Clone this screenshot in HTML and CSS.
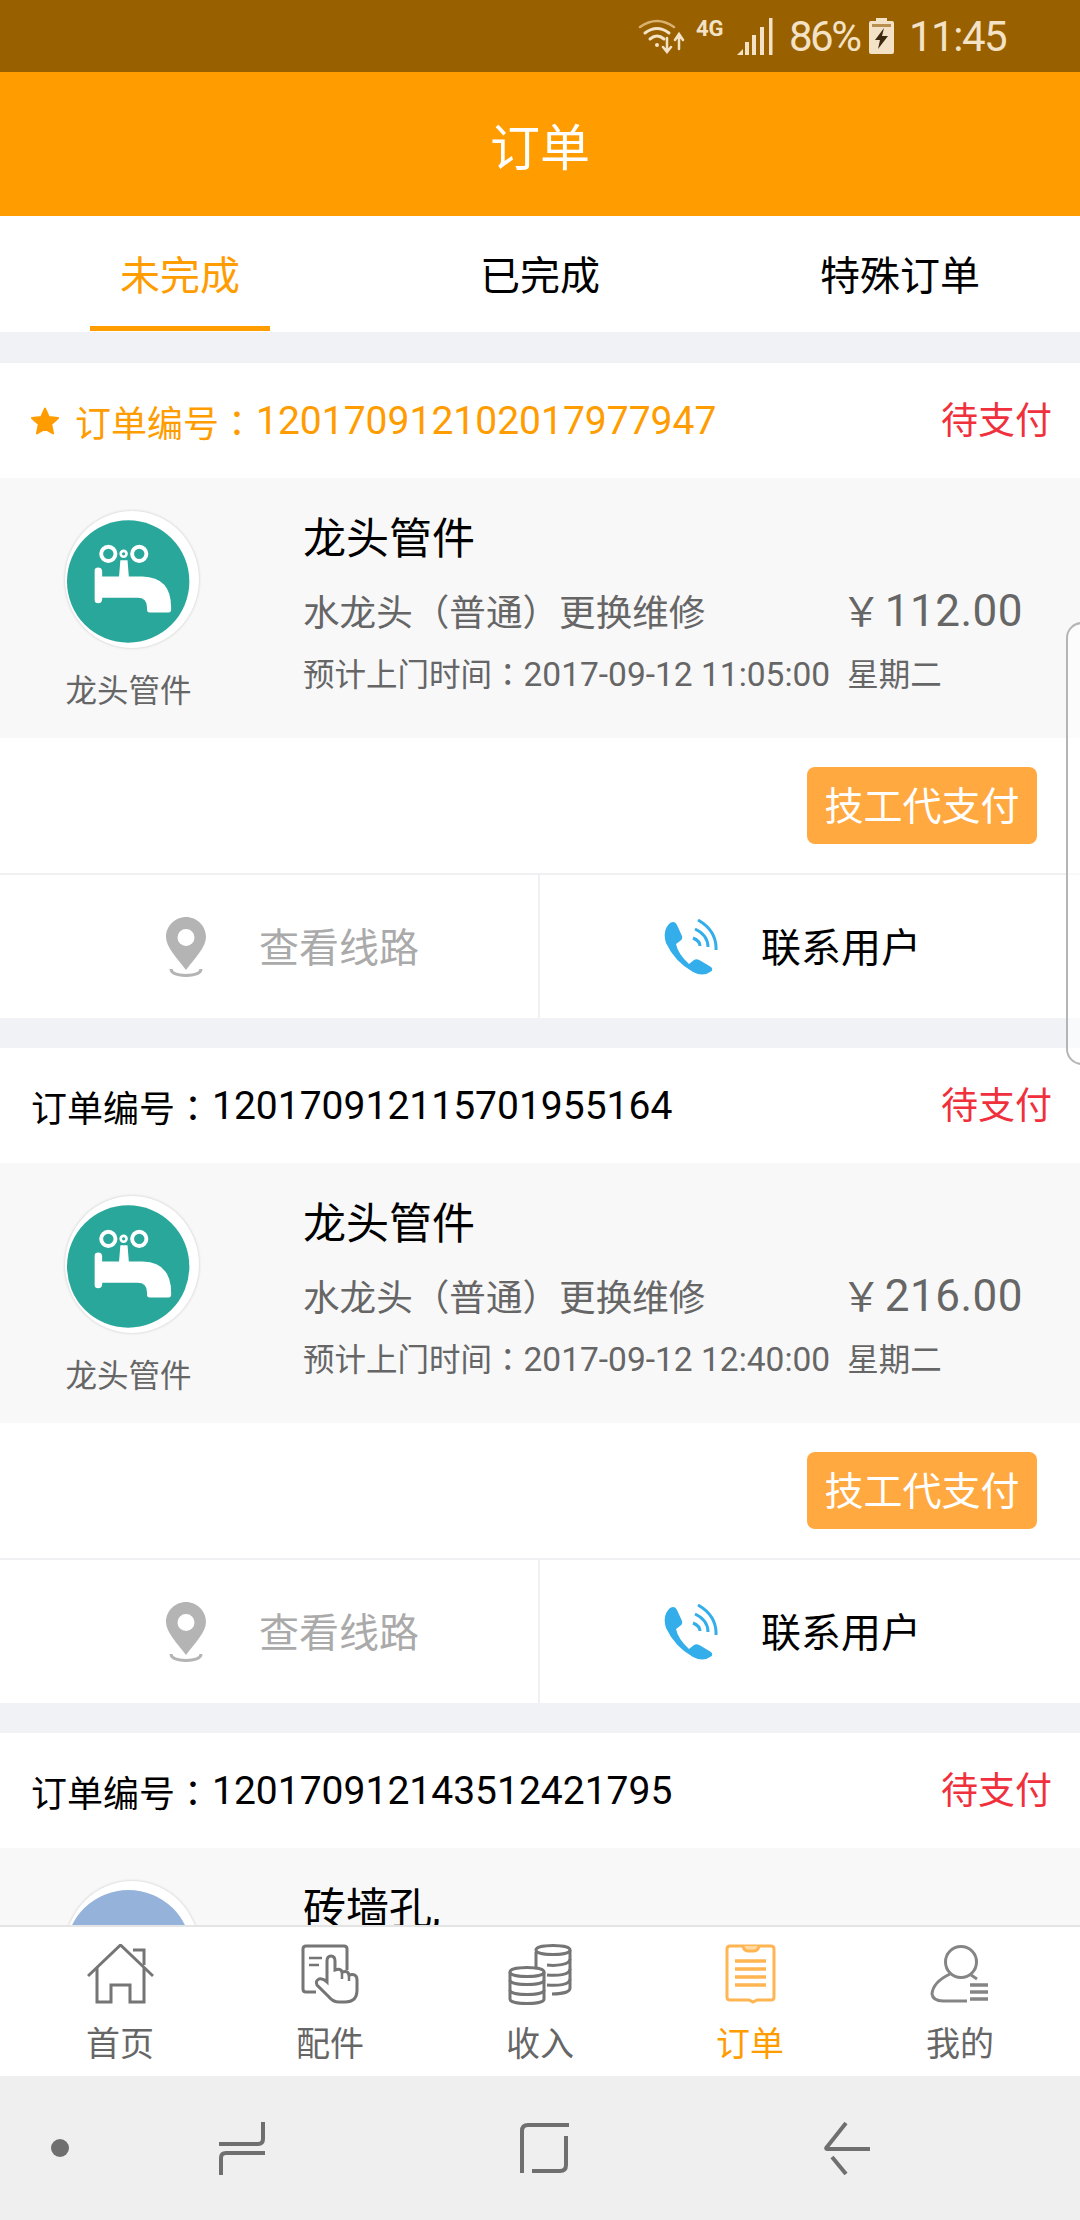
FILE: index.html
```html
<!DOCTYPE html>
<html lang="zh-CN">
<head>
    <meta charset="UTF-8">
    <meta name="viewport" content="width=device-width, initial-scale=1.0">
    <title>订单</title>
    <link rel="stylesheet" href="styles.css">
</head>
<body>
    <div class="app">
        <div class="status-bar">
            <svg class="st-wifi" viewBox="0 0 47 36" fill="none" stroke="#f3e2c6" stroke-linecap="round">
                <path d="M2 9Q19 -3 36 9" stroke="#d9b06f" stroke-width="2.5"/>
                <path d="M7 15Q19 6 31 15" stroke-width="3"/>
                <path d="M12 21Q19 15 26 21" stroke-width="3"/>
                <circle cx="19" cy="27" r="2" fill="#f3e2c6" stroke="none"/>
                <path d="M29 20V33M25 29L29 34L33 29M41 31V17M37 22L41 16L45 22" stroke-width="2.5"/>
            </svg>
            <span class="st-net">4G</span>
            <svg class="st-signal" viewBox="0 0 36 37" fill="#f3e2c6">
                <path d="M0 37L6 31V37Z"/>
                <rect x="8" y="24" width="4" height="13"/>
                <rect x="15" y="17" width="4" height="20"/>
                <rect x="23" y="9" width="4" height="28"/>
                <rect x="32" y="0" width="3.5" height="37"/>
            </svg>
            <span class="st-pct">86%</span>
            <svg class="st-batt" viewBox="0 0 25 36">
                <path d="M7 0H18V3H23Q25 3 25 5V34Q25 36 23 36H2Q0 36 0 34V5Q0 3 2 3H7Z" fill="#f3e2c6"/>
                <rect x="3" y="6" width="19" height="3" fill="#b98f4f"/>
                <path d="M15 10L6 22H11L9 31L19 18H13Z" fill="#3b2a10"/>
            </svg>
            <span class="st-time">11:45</span>
        </div>

        <div class="title-bar">订单</div>

        <div class="tabs">
            <div class="tab active">未完成</div>
            <div class="tab">已完成</div>
            <div class="tab">特殊订单</div>
        </div>

        <div class="list">
            <div class="order">
                <div class="order-head starred">
                    <div class="order-no">
                        <svg class="star" viewBox="0 0 24 24" fill="#ff9c00" stroke="#ff9c00" stroke-width="1.500" stroke-linejoin="round"><path d="M12 2L15 8.800L22.500 9.600L17 14.600L18.500 22L12 18.300L5.500 22L7 14.600L1.500 9.600L9 8.800Z"/></svg>
                        <span>订单编号<span class="colon" lang="zh-TW">：</span></span><span class="digits">120170912102017977947</span>
                    </div>
                    <div class="order-state">待支付</div>
                </div>
                <div class="order-body">
                    <div class="cat">
                        <div class="thumb">
                            <svg class="faucet" viewBox="198 116 378 378">
                                <circle cx="386" cy="305" r="188" fill="#2aa79b"/>
                                <g fill="none" stroke="#fff" stroke-width="12"><circle cx="325" cy="220" r="22"/><circle cx="420" cy="220" r="22"/><circle cx="372" cy="220" r="9" stroke-width="8"/></g>
                                <path fill="#fff" d="M362 240H384L388 290H430Q518 292 518 385V392Q518 400 510 400H452Q444 400 444 392V385Q444 355 415 355H306V362Q304 372 294 372Q283 372 283 362V272Q283 262 294 262Q304 262 306 272V290H358Z"/>
                            </svg>
                        </div>
                        <div class="cat-name">龙头管件</div>
                    </div>
                    <div class="info">
                        <div class="info-title">龙头管件</div>
                        <div class="info-row">
                            <span>水龙头（普通）更换维修</span>
                            <span class="price"><i>￥</i>112.00</span>
                        </div>
                        <div class="info-time">预计上门时间<span class="colon" lang="zh-TW">：</span><span class="stamp">2017-09-12 11:05:00</span><span class="week">星期二</span></div>
                    </div>
                </div>
                <div class="order-pay"><div class="pay-btn">技工代支付</div></div>
                <div class="order-actions">
                    <div class="action route">
                        <svg class="pin" viewBox="0 0 42 60"><path fill-rule="evenodd" fill="#b4b4b4" d="M21 0C32 0 41 9 41 20C41 30 30 41 21 53C12 41 1 30 1 20C1 9 10 0 21 0ZM21 12A8.500 8.500 0 1 0 21 29A8.500 8.500 0 1 0 21 12Z"/><path fill="none" stroke="#b4b4b4" stroke-width="3" d="M6 52Q6 58 21 58.500Q36 58 36 52"/></svg>
                        <span>查看线路</span>
                    </div>
                    <div class="action call">
                        <svg class="phone" viewBox="0 0 56 56"><path fill="#33aeea" d="M8 4Q13 1 15 6L20 17Q21 20 18 22L14 25Q16 35 27 45L32 41Q35 39 39 42L49 48Q52 51 48 53Q41 58 31 53Q13 43 4 24Q0 11 8 4Z"/><g fill="none" stroke="#33aeea" stroke-width="3"><path d="M36 1Q55 12 54 31"/><path d="M33 10Q46 16 46 28"/><path d="M31 19Q38 22 38 27"/></g></svg>
                        <span>联系用户</span>
                    </div>
                </div>
            </div>

            <div class="order">
                <div class="order-head">
                    <div class="order-no">
                        <span>订单编号<span class="colon" lang="zh-TW">：</span></span><span class="digits">120170912115701955164</span>
                    </div>
                    <div class="order-state">待支付</div>
                </div>
                <div class="order-body">
                    <div class="cat">
                        <div class="thumb">
                            <svg class="faucet" viewBox="198 116 378 378">
                                <circle cx="386" cy="305" r="188" fill="#2aa79b"/>
                                <g fill="none" stroke="#fff" stroke-width="12"><circle cx="325" cy="220" r="22"/><circle cx="420" cy="220" r="22"/><circle cx="372" cy="220" r="9" stroke-width="8"/></g>
                                <path fill="#fff" d="M362 240H384L388 290H430Q518 292 518 385V392Q518 400 510 400H452Q444 400 444 392V385Q444 355 415 355H306V362Q304 372 294 372Q283 372 283 362V272Q283 262 294 262Q304 262 306 272V290H358Z"/>
                            </svg>
                        </div>
                        <div class="cat-name">龙头管件</div>
                    </div>
                    <div class="info">
                        <div class="info-title">龙头管件</div>
                        <div class="info-row">
                            <span>水龙头（普通）更换维修</span>
                            <span class="price"><i>￥</i>216.00</span>
                        </div>
                        <div class="info-time">预计上门时间<span class="colon" lang="zh-TW">：</span><span class="stamp">2017-09-12 12:40:00</span><span class="week">星期二</span></div>
                    </div>
                </div>
                <div class="order-pay"><div class="pay-btn">技工代支付</div></div>
                <div class="order-actions">
                    <div class="action route">
                        <svg class="pin" viewBox="0 0 42 60"><path fill-rule="evenodd" fill="#b4b4b4" d="M21 0C32 0 41 9 41 20C41 30 30 41 21 53C12 41 1 30 1 20C1 9 10 0 21 0ZM21 12A8.500 8.500 0 1 0 21 29A8.500 8.500 0 1 0 21 12Z"/><path fill="none" stroke="#b4b4b4" stroke-width="3" d="M6 52Q6 58 21 58.500Q36 58 36 52"/></svg>
                        <span>查看线路</span>
                    </div>
                    <div class="action call">
                        <svg class="phone" viewBox="0 0 56 56"><path fill="#33aeea" d="M8 4Q13 1 15 6L20 17Q21 20 18 22L14 25Q16 35 27 45L32 41Q35 39 39 42L49 48Q52 51 48 53Q41 58 31 53Q13 43 4 24Q0 11 8 4Z"/><g fill="none" stroke="#33aeea" stroke-width="3"><path d="M36 1Q55 12 54 31"/><path d="M33 10Q46 16 46 28"/><path d="M31 19Q38 22 38 27"/></g></svg>
                        <span>联系用户</span>
                    </div>
                </div>
            </div>

            <div class="order">
                <div class="order-head">
                    <div class="order-no">
                        <span>订单编号<span class="colon" lang="zh-TW">：</span></span><span class="digits">120170912143512421795</span>
                    </div>
                    <div class="order-state">待支付</div>
                </div>
                <div class="order-body">
                    <div class="cat">
                        <div class="thumb"><div class="thumb-blue"></div></div>
                    </div>
                    <div class="info">
                        <div class="info-title">砖墙孔,</div>
                    </div>
                </div>
            </div>
        </div>

        <div class="tabbar">
            <div class="tabbar-item">
                <svg class="tb-icon" viewBox="0 0 67 62" fill="none" stroke="#757575" stroke-width="3"><path d="M1 32L33.500 1L66 32"/><path d="M46 6H57V21"/><path d="M10 24V58H24V41H43V58H57V24"/></svg>
                <span>首页</span>
            </div>
            <div class="tabbar-item">
                <svg class="tb-icon" viewBox="0 0 67 62" fill="none" stroke="#757575" stroke-width="3"><path d="M19 48H9Q6 48 6 45V5Q6 2 9 2H47Q50 2 50 5V26"/><path d="M12 14H25M12 21H22" stroke-width="2.500"/><path d="M30 38V17Q30 12 34 12Q38 12 38 17V26Q44 24 45 28Q51 26 52 31Q60 29 60 36V46Q60 58 48 58H42Q36 58 32 53L20 41Q18 37 22 35Q26 34 30 38Z" fill="#fff"/><path d="M45 28V35M52 31V37" stroke-width="2.500"/></svg>
                <span>配件</span>
            </div>
            <div class="tabbar-item">
                <svg class="tb-icon" viewBox="0 0 67 62" fill="none" stroke="#757575" stroke-width="3"><path d="M29 6C29 0 63 0 63 6V44C63 48 55 50 45 50"/><path d="M29 6C29 12 63 12 63 6M29 8V24M63 15C63 21 48 22 40 21M63 25C63 31 50 32 40 31M63 35C63 41 50 42 40 41"/><path d="M3 28C3 22 37 22 37 28V55C37 61 3 61 3 55Z" fill="#fff"/><path d="M3 28C3 34 37 34 37 28M3 36C3 42 37 42 37 36M3 46C3 52 37 52 37 46"/></svg>
                <span>收入</span>
            </div>
            <div class="tabbar-item active">
                <svg class="tb-icon" viewBox="0 0 67 62" fill="none" stroke="#ffb552" stroke-width="3"><path d="M13 2H54Q57 2 57 5V53Q57 56 54 56H40L36 58L32 56H13Q10 56 10 53V5Q10 2 13 2Z"/><path d="M26 2Q27 7 31 7H37Q41 7 42 2" fill="#ffd9a0"/><path d="M18 17H49M18 25H49M18 33H49M18 41H49" stroke-width="3.500"/></svg>
                <span>订单</span>
            </div>
            <div class="tabbar-item">
                <svg class="tb-icon" viewBox="0 0 67 62" fill="none" stroke="#858585" stroke-width="3"><circle cx="34" cy="18" r="15.500"/><path d="M23 30Q6 38 5 50Q6 57 16 57H40"/><path d="M44 31L50 35"/><path d="M43 41H61M43 48H61M43 55H61" stroke-width="3.500"/></svg>
                <span>我的</span>
            </div>
        </div>

        <div class="nav-bar">
            <div class="nav-dot"></div>
            <svg class="nav-recent" viewBox="0 0 46 53" fill="none" stroke="#6f6f6f" stroke-width="4"><path d="M44 0V17Q44 22 39 22H0"/><path d="M2 53V36Q2 31 7 31H46"/></svg>
            <svg class="nav-home" viewBox="0 0 49 50" fill="none" stroke="#6f6f6f" stroke-width="4"><path d="M2 50V8Q2 2 8 2H49"/><path d="M46 13V42Q46 48 40 48H12"/></svg>
            <svg class="nav-back" viewBox="0 0 46 53" fill="none" stroke="#6f6f6f" stroke-width="4"><path d="M22 1L3 25Q1 27 4 27H46"/><path d="M8 35L22 52"/></svg>
        </div>

        <div class="side-handle"></div>
    </div>
</body>
</html>
```

FILE: styles.css
```css
* {
    box-sizing: border-box;
}

html, body {
    margin: 0;
    height: 2220px;
}

body {
    font-family: Roboto, "Noto Sans CJK SC", sans-serif;
    background-color: #f0f2f5;
    color: #000;
}

.app {
    position: relative;
    display: flex;
    flex-direction: column;
    width: 1080px;
    height: 2220px;
    overflow: hidden;
}

/* status bar */
.status-bar {
    height: 72px;
    flex: none;
    background-color: #996000;
    color: #f3e2c6;
    display: flex;
    align-items: center;
    padding-left: 638px;
}

.st-wifi {
    width: 47px;
    height: 36px;
}

.st-net {
    font-size: 22px;
    font-weight: 700;
    margin: -16px 0 0 11px;
    width: 27px;
}

.st-signal {
    width: 36px;
    height: 37px;
    margin-left: 14px;
}

.st-pct {
    font-size: 42px;
    letter-spacing: -2.5px;
    margin-left: 16px;
    width: 80px;
}

.st-batt {
    width: 25px;
    height: 36px;
}

.st-time {
    font-size: 42px;
    letter-spacing: -1.5px;
    margin-left: 15px;
}

.title-bar {
    height: 144px;
    flex: none;
    background-color: #ff9c00;
    color: #fff;
    font-size: 50px;
    display: flex;
    align-items: center;
    justify-content: center;
}

/* tabs */
.tabs {
    height: 116px;
    flex: none;
    background-color: #fff;
    display: flex;
}

.tab {
    flex: 1;
    position: relative;
    font-size: 40px;
    line-height: 116px;
    padding-top: 3px;
    text-align: center;
}

.tab.active {
    color: #ff9c00;
}

.tab.active::after {
    content: "";
    position: absolute;
    left: 90px;
    bottom: 1px;
    width: 180px;
    height: 5px;
    background-color: #ff9c00;
}

/* order list */
.list {
    flex: 1;
    min-height: 0;
    overflow: hidden;
    padding-top: 31px;
}

.order {
    background-color: #fff;
    margin-bottom: 30px;
}

.order-head {
    height: 115px;
    display: flex;
    align-items: center;
    justify-content: space-between;
    padding: 0 31px;
    font-size: 36px;
}

.order-no {
    display: flex;
    align-items: center;
}

.colon {
    font-family: "Noto Sans CJK TC", sans-serif;
}

.digits {
    font-size: 39px;
    margin-left: 1px;
}

.starred {
    padding-left: 30px;
}

.starred .order-no {
    color: #ff9c00;
}

.star {
    width: 30px;
    height: 30px;
    margin-right: 15px;
}

.order-state {
    color: #f0303c;
    font-size: 37px;
    margin: -5px -3px 0 0;
}

.order-body {
    height: 260px;
    background-color: #f8f8f9;
    display: flex;
    overflow: hidden;
}

.cat {
    width: 257px;
    padding-top: 33px;
    display: flex;
    flex-direction: column;
    align-items: center;
}

.thumb {
    width: 134px;
    height: 137px;
    margin-left: 6px;
    padding: 9px 0 5px 1px;
    border-radius: 50%;
    background-color: #fff;
    box-shadow: 0 0 3px rgba(0, 0, 0, 0.2);
    display: flex;
    align-items: center;
    flex: none;
}

.faucet {
    width: 125px;
    height: 123px;
}

.thumb-blue {
    width: 125px;
    height: 123px;
    border-radius: 50%;
    background-color: #94b2da;
}

.cat-name {
    font-size: 31.500px;
    line-height: 40px;
    color: #666;
    margin-top: 24px;
}

.info {
    flex: 1;
    padding: 31px 57px 0 46px;
}

.info-title {
    font-size: 43px;
    line-height: 60px;
}

.info-row {
    display: flex;
    justify-content: space-between;
    align-items: center;
    font-size: 36.600px;
    line-height: 60px;
    color: #666;
    margin-top: 14px;
}

.price {
    font-size: 44px;
    line-height: 52px;
    margin-bottom: 8px;
    letter-spacing: 0.5px;
}

.price i {
    font-style: normal;
    font-family: "Noto Sans CJK SC", sans-serif;
    font-size: 40px;
    margin-right: 3px;
}

.info-time {
    font-size: 31.500px;
    line-height: 60px;
    color: #666;
    margin-top: -3px;
    white-space: nowrap;
}

.stamp {
    font-size: 33.500px;
}

.week {
    margin-left: 17px;
}

.order-pay {
    height: 135px;
    display: flex;
    align-items: center;
    justify-content: flex-end;
    padding-right: 43px;
}

.pay-btn {
    width: 230px;
    height: 77px;
    padding-top: 3px;
    line-height: 74px;
    text-align: center;
    background-color: #ffa940;
    border-radius: 8px;
    color: #fff;
    font-size: 39px;
}

.order-actions {
    height: 145px;
    border-top: 2px solid #f0f0f2;
    display: flex;
}

.action {
    width: 50%;
    display: flex;
    align-items: center;
    font-size: 40px;
}

.action span {
    margin-top: -4px;
}

.route {
    border-right: 2px solid #f0f0f2;
    padding-left: 165px;
    color: #aaa;
}

.call {
    padding-left: 122px;
}

.pin {
    width: 42px;
    height: 60px;
    margin-right: 52px;
}

.phone {
    width: 56px;
    height: 56px;
    margin-right: 43px;
}

/* bottom tabs */
.tabbar {
    height: 151px;
    flex: none;
    background-color: #fff;
    border-top: 2px solid #e4e4e4;
    padding: 17px 15px 0;
    display: grid;
    grid-template-columns: repeat(5, 1fr);
}

.tabbar-item {
    display: flex;
    flex-direction: column;
    align-items: center;
    font-size: 34px;
    line-height: 46px;
    color: #666;
}

.tabbar-item.active {
    color: #ff9c00;
}

.tb-icon {
    width: 67px;
    height: 62px;
    margin-bottom: 15px;
}

/* system nav */
.nav-bar {
    height: 144px;
    flex: none;
    background-color: #efefef;
    display: flex;
    align-items: center;
    padding-left: 51px;
}

.nav-dot {
    width: 18px;
    height: 18px;
    border-radius: 50%;
    background-color: #6f6f6f;
    margin-right: 150px;
}

.nav-recent, .nav-back {
    width: 46px;
    height: 53px;
}

.nav-home {
    width: 49px;
    height: 50px;
    margin: 0 255px;
}

.side-handle {
    position: absolute;
    top: 622px;
    right: -10px;
    width: 24px;
    height: 443px;
    border: 2px solid #b5b5b8;
    border-radius: 16px 0 0 16px;
    background-color: rgba(255, 255, 255, 0.6);
}
```
